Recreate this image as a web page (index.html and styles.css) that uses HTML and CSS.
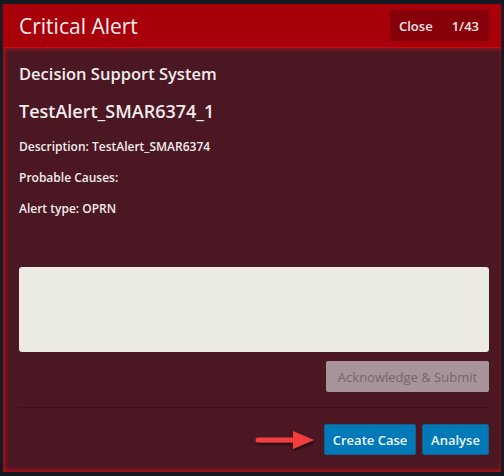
FILE: index.html
```html
<!DOCTYPE html>
<html>
<head>
<meta charset="utf-8">
<link rel="stylesheet" href="styles.css">
</head>
<body>
<div class="modal">
  <div class="header">
    <h1 class="title">Critical Alert</h1>
    <div class="close-box"><span class="close">Close</span><span class="count">1/43</span></div>
  </div>
  <div class="body">
    <h2 class="system">Decision Support System</h2>
    <h3 class="alert-name">TestAlert_SMAR6374_1</h3>
    <p class="info">Description: TestAlert_SMAR6374</p>
    <p class="info">Probable Causes:</p>
    <p class="info">Alert type: OPRN</p>
    <div class="textarea"></div>
    <div class="ack-row"><button class="btn ack">Acknowledge &amp; Submit</button></div>
    <div class="sep"></div>
    <div class="footer">
      <svg class="arrow" width="70" height="30" viewBox="0 0 70 30">
        <defs>
          <filter id="sh" x="-20%" y="-50%" width="140%" height="200%">
            <feDropShadow dx="1" dy="2" stdDeviation="1.5" flood-color="#000" flood-opacity="0.6"/>
          </filter>
        </defs>
        <g filter="url(#sh)">
          <line x1="8" y1="15" x2="46" y2="15" stroke="#f23c3c" stroke-width="5" stroke-linecap="round"/>
          <polygon points="43,6 64,15 43,24" fill="#f23c3c"/>
        </g>
      </svg>
      <button class="btn blue create">Create Case</button>
      <button class="btn blue analyse">Analyse</button>
    </div>
  </div>
</div>
</body>
</html>
```
FILE: styles.css
```css
html, body {
  margin: 0;
  padding: 0;
  background: #121a22;
  width: 504px;
  height: 476px;
  overflow: hidden;
}
body {
  font-family: "Open Sans", "DejaVu Sans", sans-serif;
  color: #f2ecec;
  padding: 4px 3px 4px 3px;
  box-sizing: border-box;
}
.modal {
  width: 498px;
  height: 468px;
  background: #4b1723;
  box-shadow: inset 3px 0 4px -1px #b0101a, inset 0 -3px 4px -1px #b0101a, inset -1px 0 3px -1px #8a1018;
  display: flex;
  flex-direction: column;
}
.header {
  height: 44px;
  background: #a8000a;
  border-bottom: 1px solid #c40d18;
  display: flex;
  align-items: center;
  justify-content: space-between;
  padding: 0 12px 0 16px;
  box-sizing: border-box;
  box-shadow: 0 2px 4px rgba(190, 20, 30, 0.5);
}
.title {
  margin: 0;
  font-size: 21px;
  font-weight: 500;
  color: #f6eeee;
}
.close-box {
  background: #850008;
  height: 31px;
  width: 99px;
  border-radius: 2px;
  display: flex;
  align-items: center;
  box-sizing: border-box;
  padding-left: 9px;
  font-size: 13px;
  font-weight: 600;
  color: #f2e6e6;
}
.close { margin-right: 19px; }
.body {
  padding: 15px 12px 0 16px;
  display: flex;
  flex-direction: column;
}
.system {
  margin: 0;
  font-size: 16.5px;
  font-weight: 600;
  height: 22px;
  line-height: 22px;
}
.alert-name {
  margin: 14px 0 0 0;
  font-size: 18px;
  font-weight: 600;
  height: 24px;
  line-height: 24px;
}
.info {
  margin: 0;
  font-size: 12px;
  font-weight: 600;
  height: 31px;
  line-height: 31px;
}
.info:first-of-type { margin-top: 8px; }
.textarea {
  margin-top: 43px;
  height: 85px;
  background: #ebebe3;
  border-radius: 3px;
}
.ack-row {
  display: flex;
  justify-content: flex-end;
  margin-top: 9px;
}
.btn {
  font-family: inherit;
  border: none;
  border-radius: 2px;
  font-size: 13px;
  height: 31px;
  padding: 0;
  white-space: nowrap;
  cursor: pointer;
}
.ack {
  background: #a7939a;
  color: #786469;
  width: 163px;
}
.sep {
  margin-top: 15px;
  height: 1px;
  background: #3d101b;
}
.footer {
  display: flex;
  justify-content: flex-end;
  align-items: center;
  margin-top: 16px;
  gap: 6px;
}
.arrow {
  margin-right: -2px;
}
.blue {
  background: #0079b8;
  color: #f2f6fa;
  border: 1px solid #1a5d8a;
  font-weight: 600;
  height: 31px;
}
.create { width: 92px; }
.analyse { width: 67px; }
```
